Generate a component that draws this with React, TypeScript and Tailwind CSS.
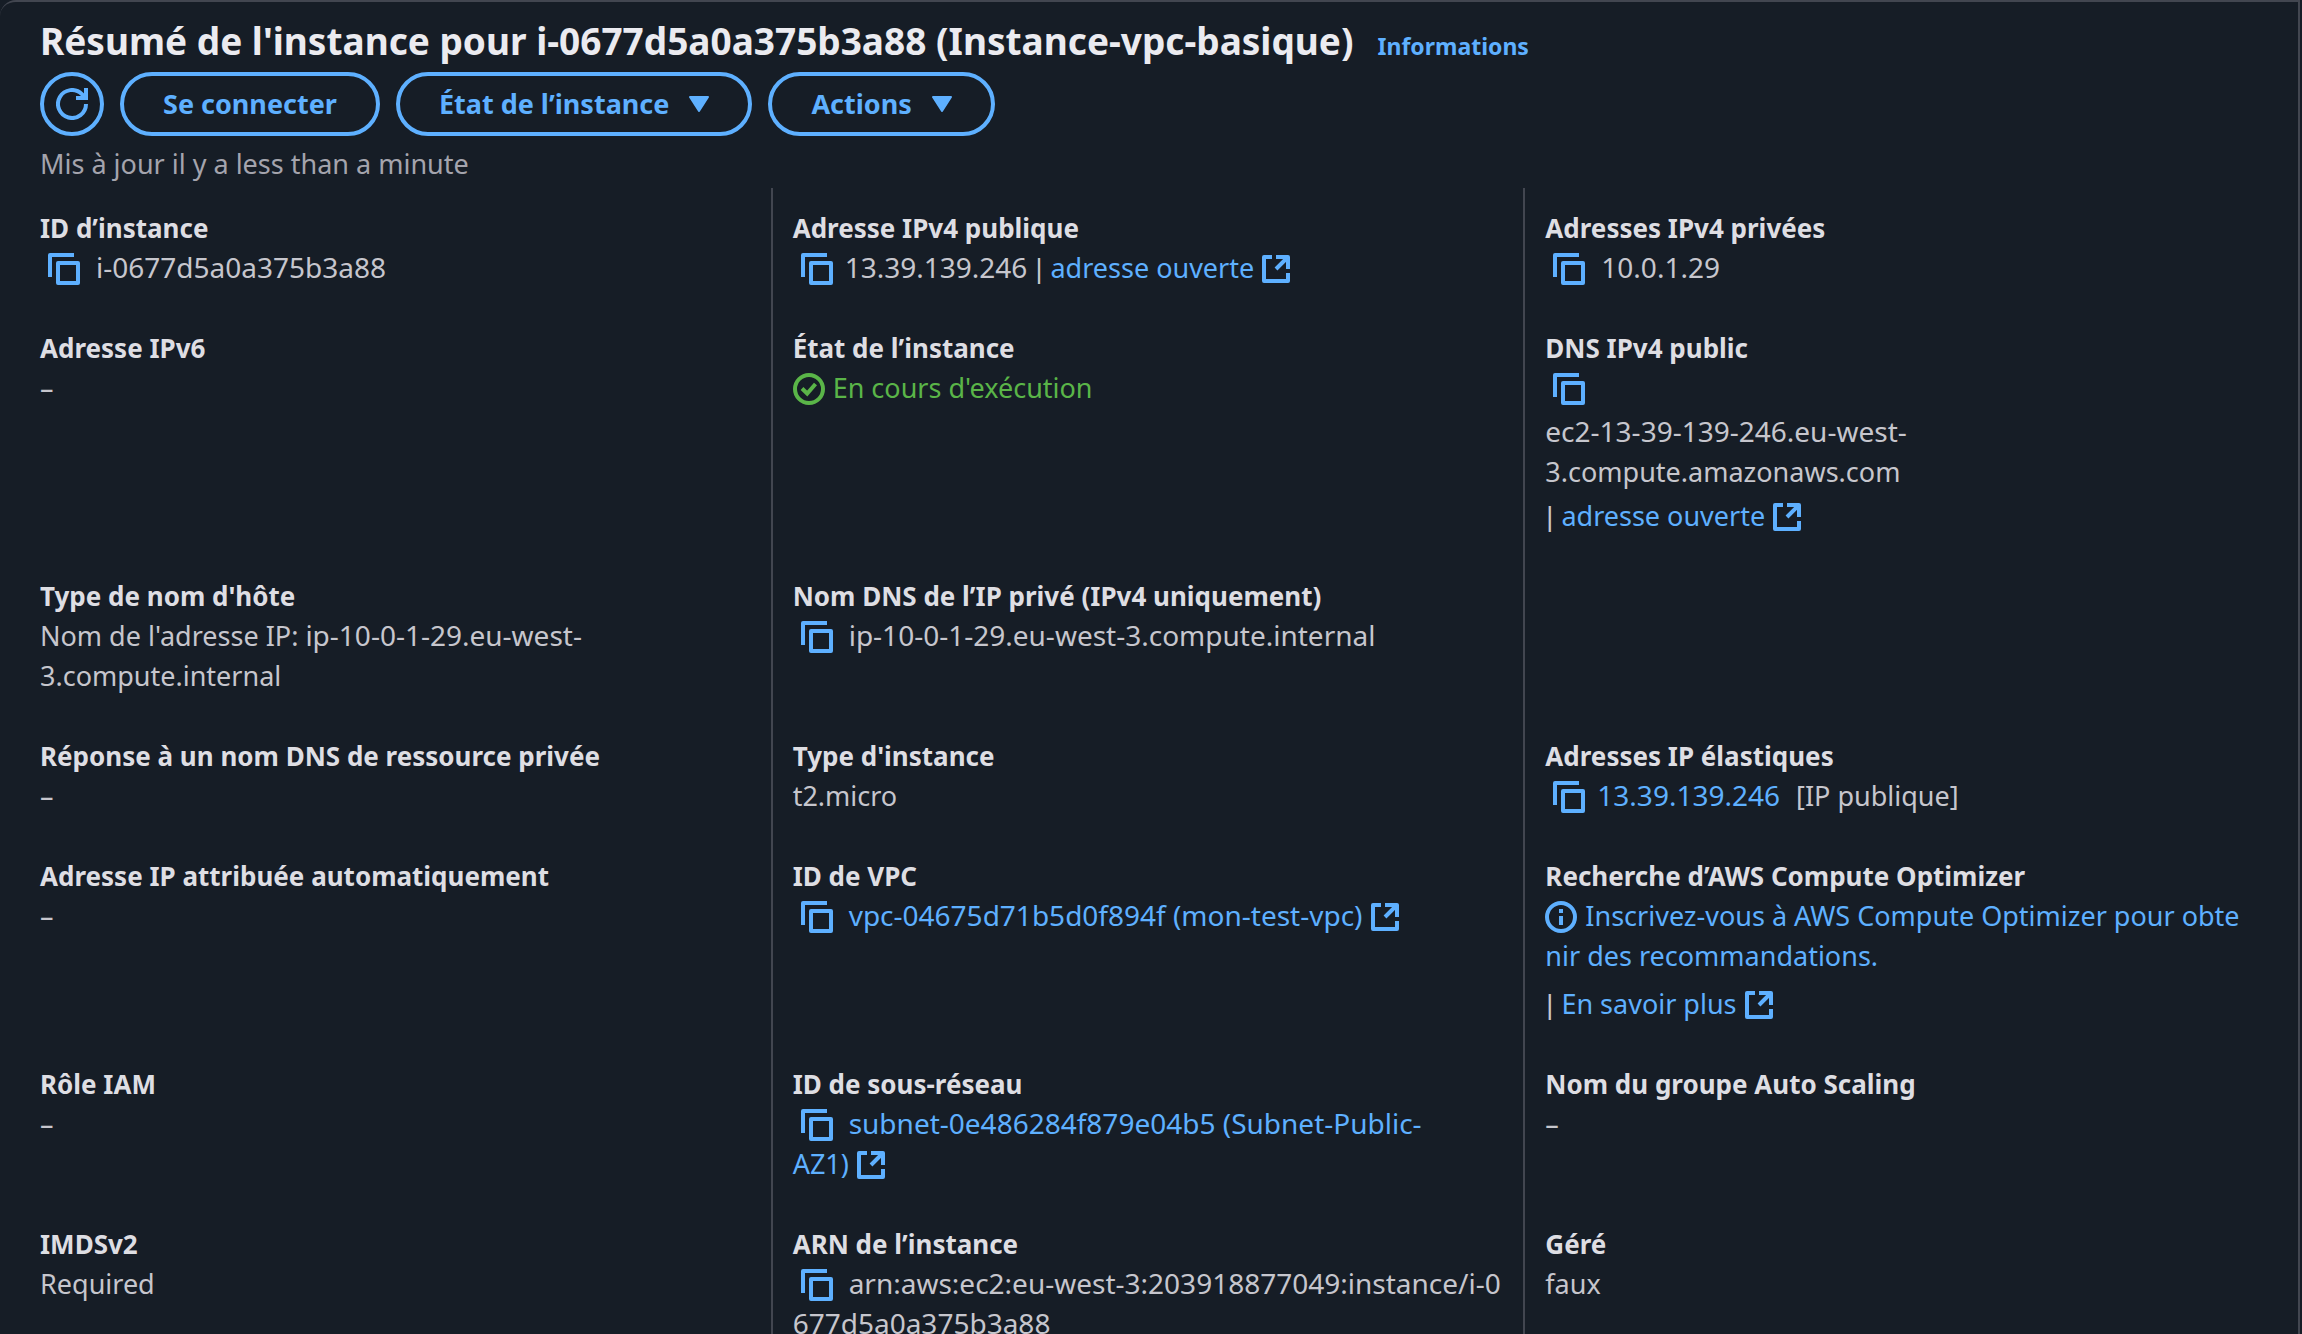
import type { ReactNode } from "react";

function CopyButton({ tight = false }: { tight?: boolean }) {
  return (
    <button
      type="button"
      aria-label="Copier"
      className={`-my-2 ml-2 inline-block h-8 w-8 -translate-y-0.5 align-middle text-[#5eb0ff] ${tight ? "mr-3" : "mr-4"}`}
    >
      <svg viewBox="0 0 32 32" className="block h-8 w-8" fill="none" stroke="currentColor" strokeWidth="4" strokeLinejoin="round" aria-hidden="true">
        <path d="M26 2H2v22" />
        <path d="M10 10h20v20H10z" />
      </svg>
    </button>
  );
}

function ExternalIcon() {
  return (
    <svg viewBox="0 0 28 28" className="-my-2 ml-2 inline-block h-7 w-7 -translate-y-0.5 align-middle" fill="none" stroke="currentColor" strokeWidth="4" strokeLinejoin="round" aria-hidden="true">
      <path d="M10 2H2v24h24v-8" />
      <path d="M14 2h12v12M26 2 14 14" />
    </svg>
  );
}

function RefreshIcon() {
  return (
    <svg viewBox="0 0 32 32" className="h-8 w-8" fill="none" stroke="currentColor" strokeWidth="4" aria-hidden="true">
      <path d="M30 16A14 14 0 1 1 25.9 6.1L29 9.5" />
      <path d="M30 0v10H20" />
    </svg>
  );
}

function Caret() {
  return (
    <svg viewBox="0 0 20 16" className="ml-5 h-4 w-5" fill="currentColor" stroke="currentColor" strokeWidth="2" strokeLinejoin="round" aria-hidden="true">
      <path d="M1 1h18L10 15z" />
    </svg>
  );
}

function SuccessIcon() {
  return (
    <svg viewBox="0 0 32 32" className="-my-2 mr-2 inline-block h-8 w-8 -translate-y-0.5 align-middle" fill="none" stroke="currentColor" strokeWidth="4" aria-hidden="true">
      <circle cx="16" cy="16" r="14" />
      <path d="m9 15.5 5.200 5L22.500 11" />
    </svg>
  );
}

function InfoIcon() {
  return (
    <svg viewBox="0 0 32 32" className="-my-2 mr-2 inline-block h-8 w-8 -translate-y-0.5 align-middle" fill="none" stroke="currentColor" strokeWidth="4" aria-hidden="true">
      <circle cx="16" cy="16" r="14" />
      <path d="M16 8v4M16 15v9" />
    </svg>
  );
}

function Link({ children }: { children: ReactNode }) {
  return (
    <a href="#" className="text-[#5eb0ff]">
      {children}
    </a>
  );
}

function Id({ children }: { children: ReactNode }) {
  return <span className="text-[28px] leading-none">{children}</span>;
}

function Pipe() {
  return <span className="mx-px font-['Liberation_Sans',sans-serif] leading-none">|</span>;
}

const none = "–";

const fields: { label: string; value: ReactNode }[] = [
  { label: "ID d’instance", value: <><CopyButton /><Id>i-0677d5a0a375b3a88</Id></> },
  {
    label: "Adresse IPv4 publique",
    value: <><CopyButton tight /><Id>13.39.139.246</Id> <Pipe /> <Link>adresse ouverte<ExternalIcon /></Link></>,
  },
  { label: "Adresses IPv4 privées", value: <><CopyButton /><Id>10.0.1.29</Id></> },

  { label: "Adresse IPv6", value: none },
  {
    label: "État de l’instance",
    value: <span className="text-[#5ab548]"><SuccessIcon />En cours d'exécution</span>,
  },
  {
    label: "DNS IPv4 public",
    value: (
      <div className="flex flex-col gap-1">
        <div><CopyButton /></div>
        <div>
          <Id>ec2-13-39-139-246.eu-west-</Id>
          <br />
          3.compute.amazonaws.com
        </div>
        <div><Pipe /> <Link>adresse ouverte<ExternalIcon /></Link></div>
      </div>
    ),
  },

  {
    label: "Type de nom d'hôte",
    value: <>Nom de l'adresse IP: <Id>ip-10-0-1-29.eu-west-</Id><br />3.compute.internal</>,
  },
  { label: "Nom DNS de l’IP privé (IPv4 uniquement)", value: <><CopyButton /><Id>ip-10-0-1-29.eu-west-3.compute.internal</Id></> },
  { label: "", value: null },

  { label: "Réponse à un nom DNS de ressource privée", value: none },
  { label: "Type d'instance", value: "t2.micro" },
  {
    label: "Adresses IP élastiques",
    value: <><CopyButton tight /><Link><Id>13.39.139.246</Id></Link><span className="ml-4">[IP publique]</span></>,
  },

  { label: "Adresse IP attribuée automatiquement", value: none },
  {
    label: "ID de VPC",
    value: <><CopyButton /><Link><Id>vpc-04675d71b5d0f894f (mon-test-vpc)</Id><ExternalIcon /></Link></>,
  },
  {
    label: "Recherche d’AWS Compute Optimizer",
    value: (
      <div className="flex flex-col gap-2">
        <div>
          <Link><InfoIcon />Inscrivez-vous à AWS Compute Optimizer pour obte<br />nir des recommandations.</Link>
        </div>
        <div><Pipe /> <Link>En savoir plus<ExternalIcon /></Link></div>
      </div>
    ),
  },

  { label: "Rôle IAM", value: none },
  {
    label: "ID de sous-réseau",
    value: <><CopyButton /><Link><Id>subnet-0e486284f879e04b5 (Subnet-Public-</Id><br />AZ1)<ExternalIcon /></Link></>,
  },
  { label: "Nom du groupe Auto Scaling", value: none },

  { label: "IMDSv2", value: "Required" },
  {
    label: "ARN de l’instance",
    value: <><CopyButton /><Id>arn:aws:ec2:eu-west-3:203918877049:instance/i-0<br />677d5a0a375b3a88</Id></>,
  },
  { label: "Géré", value: "faux" },
];

const button =
  "flex h-16 items-center rounded-full border-4 border-[#5eb0ff] text-[27px] font-bold text-[#5eb0ff]";

export default function App() {
  return (
    <div className="h-screen overflow-hidden bg-[#161d26] font-['Noto_Sans',sans-serif]">
      <main className="mr-0.5 h-full rounded-tl-2xl border-t-2 border-r-2 border-[#424650] text-[27px] leading-10 text-[#c6c6cd]">
        <header className="px-10 pt-3">
          <div className="flex items-baseline gap-6 pb-1">
            <h1 className="text-[37px] leading-[54px] font-bold text-[#ebebf0]">
              Résumé de l'instance pour i-0677d5a0a375b3a88 (Instance-vpc-basique)
            </h1>
            <a href="#" className="text-[23px] font-bold text-[#5eb0ff]">Informations</a>
          </div>
          <div className="flex gap-4">
            <button type="button" aria-label="Actualiser" className={`${button} w-16 justify-center`}>
              <RefreshIcon />
            </button>
            <button type="button" className={`${button} px-[39px]`}>Se connecter</button>
            <button type="button" className={`${button} px-[39px]`}>État de l’instance<Caret /></button>
            <button type="button" className={`${button} px-[39px]`}>Actions<Caret /></button>
          </div>
          <p className="mt-2 text-[#a4a4ad]">Mis à jour il y a less than a minute</p>
        </header>
        <dl className="mt-1 grid grid-cols-3 pr-[22px] pl-[18px]">
          {fields.map((f, i) => (
            <div
              key={i}
              className={`border-l-2 pr-4 pb-10 pl-5 ${i % 3 === 0 ? "border-transparent" : "border-[#424650]"} ${i < 3 ? "pt-5" : ""}`}
            >
              <dt className="text-[26px] font-bold text-[#dedee3]">{f.label}</dt>
              <dd className="whitespace-nowrap">{f.value}</dd>
            </div>
          ))}
        </dl>
      </main>
    </div>
  );
}
